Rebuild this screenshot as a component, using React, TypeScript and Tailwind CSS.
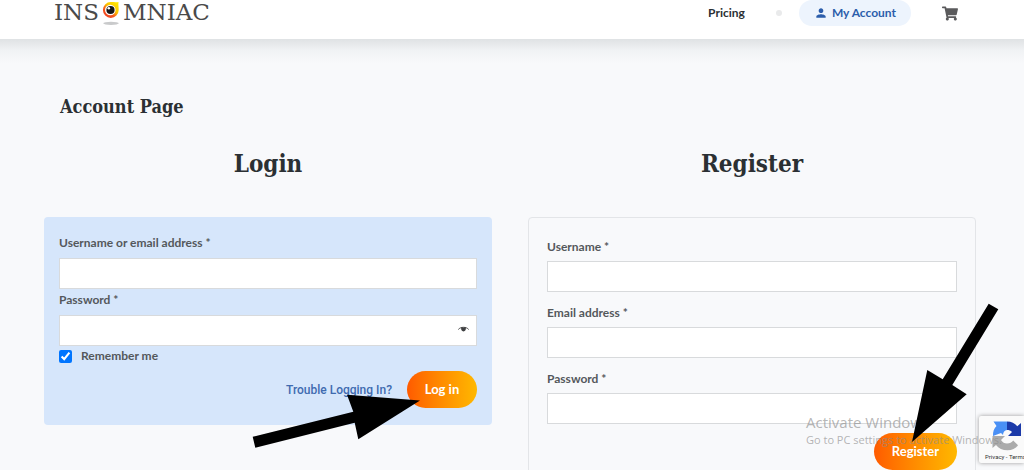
import React, { useState } from 'react'
import { MdPerson } from 'react-icons/md'
import { FaShoppingCart } from 'react-icons/fa'

interface FieldProps {
  id: string;
  label: string;
  type?: string;
}

const inputClass = "block w-full h-[31px] px-2 bg-white border border-[#d8dadc] text-xs outline-none"

function RegisterField({ id, label, type = 'text' }: FieldProps) {
  return (
    <div className="pt-[11px]">
      <label htmlFor={id} className="block text-xs leading-5 pb-1 font-bold text-[#54585b]">
        {label} *
      </label>
      <input id={id} type={type} className={inputClass} />
    </div>
  )
}

function LogoEye() {
  return (
    <svg width="18" height="25" viewBox="0 0 18 25" aria-hidden="true">
      <defs>
        <linearGradient id="eye" x1="1" y1="0" x2="0.2" y2="1">
          <stop offset="0" stopColor="#ffee00" />
          <stop offset="0.45" stopColor="#fdc500" />
          <stop offset="0.7" stopColor="#f4581c" />
          <stop offset="1" stopColor="#ef3e23" />
        </linearGradient>
      </defs>
      <ellipse cx="9" cy="23.300" rx="7.800" ry="1.600" fill="#c9cacb" />
      <path d="M16.500 2C16.100 4.500 16.700 7 16.700 10a7.900 7.900 0 1 1-8-7.900C12 2.100 14 2.500 16.500 2z" fill="url(#eye)" />
      <circle cx="8.300" cy="10" r="5.300" fill="#fff" />
      <circle cx="8.500" cy="10" r="4.100" fill="#171717" />
      <circle cx="6.800" cy="8.300" r="1.300" fill="#fff" />
    </svg>
  )
}

function Header() {
  return (
    <header className="relative flex items-start justify-between h-[39px] pl-[54px] pr-[66px] bg-white">
      <a href="#home" className="flex items-start text-[#4a4a4a] font-['DejaVu_Serif',serif] text-[23px] leading-[25px]" aria-label="Insomniac">
        <span>INS</span>
        <span className="mx-[3px]"><LogoEye /></span>
        <span>MNIAC</span>
      </a>
      <nav className="flex items-center h-[26px] text-xs font-bold">
        <a href="#pricing" className="text-[#2b3033]">Pricing</a>
        <span className="w-1.5 h-1.5 ml-[31px] mr-[17px] rounded-full bg-[#e9eaeb]" />
        <a href="#account" className="flex items-center gap-1 h-[26px] px-[15px] rounded-full bg-[#edf4fd] text-[#2b5dab]">
          <MdPerson className="w-3.5 h-3.5" />
          My Account
        </a>
        <a href="#cart" aria-label="Cart" className="ml-[31px] text-[#5a5a5c]">
          <FaShoppingCart className="w-4 h-[15px]" />
        </a>
      </nav>
      <div className="absolute left-0 right-0 top-full h-6 bg-linear-to-b from-[#dfe2e4] via-[#f1f3f5] to-[#f8f9fb]" />
    </header>
  )
}

function LoginForm() {
  const [remember, setRemember] = useState(true)

  return (
    <form className="px-[15px] pt-4 pb-[17px] rounded bg-[#d6e6fb] text-xs font-bold text-[#54585b]" onSubmit={(e) => e.preventDefault()}>
      <label htmlFor="login-user" className="block leading-5 pb-[5px]">Username or email address *</label>
      <input id="login-user" type="text" className={inputClass} />
      <label htmlFor="login-password" className="block leading-5 pt-px pb-[5px]">Password *</label>
      <div className="relative">
        <input id="login-password" type="password" className={inputClass} />
        <button type="button" aria-label="Show password" className="absolute right-2 top-[11px]">
          <svg width="11" height="8" viewBox="0 0 11 8">
            <path d="M0.300 3.500C2.500 0.600 8.500 0.600 10.700 3.500" fill="none" stroke="#4a4a4a" strokeWidth="1" />
            <path d="M3.200 1.600h4.600c.5 2.300-.6 3.900-2.300 3.900s-2.800-1.600-2.300-3.900z" fill="#3f4042" />
          </svg>
        </button>
      </div>
      <div className="flex items-center h-5">
        <input
          id="remember"
          type="checkbox"
          checked={remember}
          onChange={(e) => setRemember(e.target.checked)}
          className="w-[13px] h-[13px] accent-[#0075ff]"
        />
        <label htmlFor="remember" className="ml-[9px]">Remember me</label>
      </div>
      <div className="flex items-center justify-end gap-[15px] mt-[5px]">
        <a href="#lost" className="font-['Roboto',sans-serif] font-medium text-[#3f6bb0]">Trouble Logging In?</a>
        <button type="submit" className="w-[70px] h-[37px] rounded-full bg-linear-to-r from-[#ff5a00] to-[#ffb800] text-white text-[13px] font-bold">
          Log in
        </button>
      </div>
    </form>
  )
}

function RegisterForm() {
  return (
    <form className="px-[18px] pt-2 pb-6 rounded border border-[#e3e5e8]" onSubmit={(e) => e.preventDefault()}>
      <RegisterField id="reg-user" label="Username" />
      <RegisterField id="reg-email" label="Email address" type="email" />
      <RegisterField id="reg-password" label="Password" type="password" />
      <div className="flex justify-end mt-[9px]">
        <button type="submit" className="w-[83px] h-[37px] rounded-full bg-linear-to-r from-[#ff5a00] to-[#ffb800] text-white text-[13px] font-bold">
          Register
        </button>
      </div>
    </form>
  )
}

function CaptchaBadge() {
  return (
    <div className="absolute right-0 bottom-[7px] w-[45px] h-[47px] pt-[5px] overflow-hidden rounded-l-xs bg-[#fafafa] shadow-[0_0_4px_#999]">
      <svg width="30" height="30" viewBox="0 0 30 30" className="ml-[13px]" aria-hidden="true">
        <path d="M15 0.500v8.500c-2.500.3-3.800 2-4 5l-2-2-8 3C0.800 10.500 2 7.500 4.500 5L1.500 0.500z" fill="#4a90f5" />
        <path d="M15 0.500c4.500 0 7.800 1.700 10.300 4.800L29 2v13H16l4-4c-1.300-1.500-3-2-5-2z" fill="#1c3aa9" />
        <path d="M0.500 15h12.500l-4 4c1.500 2.500 3.500 3.500 6 3.500 2.800 0 4.800-1.200 6.200-3l4.800 4.800C23.500 27.700 20 29.300 15.500 29.300 10.500 29.300 6.700 27.300 4 24L0.500 27z" fill="#ababab" />
      </svg>
      <p className="pl-[6px] text-[6px] leading-3 whitespace-nowrap text-[#333] font-['Roboto',sans-serif]">Privacy - Terms</p>
    </div>
  )
}

export default function App() {
  return (
    <div className="relative h-screen overflow-hidden bg-[#f8f9fb] font-['Lato',sans-serif]">
      <Header />
      <main className="pl-11 pr-12 pt-14 text-[#2b3033]">
        <h1 className="pl-4 text-lg leading-6 font-bold font-['DejaVu_Serif_Condensed','DejaVu_Serif',serif]">Account Page</h1>
        <div className="grid grid-cols-2 gap-9 items-start mt-[29px]">
          <section>
            <h2 className="mb-[37px] text-center text-2xl font-bold font-['DejaVu_Serif_Condensed','DejaVu_Serif',serif]">Login</h2>
            <LoginForm />
          </section>
          <section>
            <h2 className="mb-[37px] text-center text-2xl font-bold font-['DejaVu_Serif_Condensed','DejaVu_Serif',serif]">Register</h2>
            <RegisterForm />
          </section>
        </div>
      </main>

      <CaptchaBadge />

      <div className="absolute left-[806px] top-[412px] whitespace-nowrap text-[#8c8c8c]/65 font-['Open_Sans',sans-serif] pointer-events-none">
        <p className="text-[15px] leading-5">Activate Windows</p>
        <p className="text-[11px] leading-4">Go to PC settings to activate Windows.</p>
      </div>

      {/* pointer arrows drawn over the page */}
      <svg width="1024" height="470" viewBox="0 0 1024 470" className="absolute left-0 top-0 pointer-events-none" aria-hidden="true">
        <path d="M252.700 436.700L353.300 411.700L347 394.700L420 400.500L358.300 439.300L354.700 422.700L255.300 447.700z" />
        <path d="M988.700 303.700L998.300 309.300L952.300 385L966.700 394.300L912 442L927.300 370L942.700 379.300z" />
      </svg>
    </div>
  )
}
